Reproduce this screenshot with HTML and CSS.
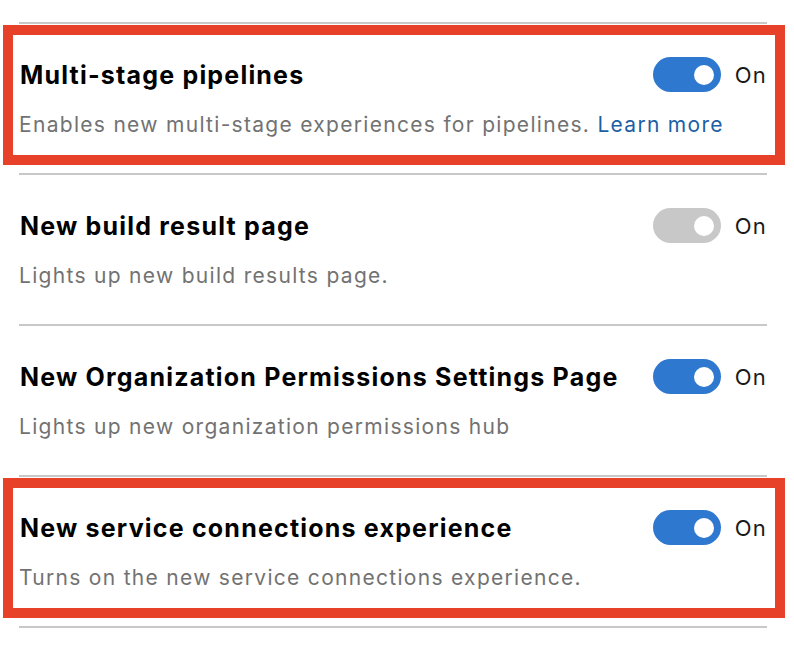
FILE: index.html
```html
<!DOCTYPE html>
<html>
<head>
<meta charset="utf-8">
<link rel="stylesheet" href="styles.css">
</head>
<body>
<div class="list">
  <div class="row marked">
    <div class="head">
      <div class="title">Multi-stage pipelines</div>
      <div class="ctl"><span class="toggle on"><span class="knob"></span></span><span class="state">On</span></div>
    </div>
    <div class="desc">Enables new multi-stage experiences for pipelines. <a class="link">Learn more</a></div>
  </div>
  <div class="row">
    <div class="head">
      <div class="title">New build result page</div>
      <div class="ctl"><span class="toggle off"><span class="knob"></span></span><span class="state">On</span></div>
    </div>
    <div class="desc">Lights up new build results page.</div>
  </div>
  <div class="row">
    <div class="head">
      <div class="title">New Organization Permissions Settings Page</div>
      <div class="ctl"><span class="toggle on"><span class="knob"></span></span><span class="state">On</span></div>
    </div>
    <div class="desc">Lights up new organization permissions hub</div>
  </div>
  <div class="row marked">
    <div class="head">
      <div class="title">New service connections experience</div>
      <div class="ctl"><span class="toggle on"><span class="knob"></span></span><span class="state">On</span></div>
    </div>
    <div class="desc">Turns on the new service connections experience.</div>
  </div>
  <div class="end"></div>
</div>
</body>
</html>
```
FILE: styles.css
```css
html, body {
  margin: 0;
  padding: 0;
  background: #ffffff;
}
body {
  font-family: Inter, "Noto Sans", sans-serif;
  color: #000;
}
.list {
  width: 748px;
  margin-left: 19px;
  padding-top: 22px;
}
.row {
  position: relative;
  height: 149px;
  border-top: 2px solid #c8c8c8;
  display: flex;
  flex-direction: column;
}
.end {
  border-top: 2px solid #c8c8c8;
}
.marked::after {
  content: "";
  position: absolute;
  left: -16px;
  right: -18px;
  top: 1px;
  height: 120px;
  border: 10px solid #e8412a;
  pointer-events: none;
}
.head {
  margin-top: 33px;
  height: 35px;
  display: flex;
  align-items: center;
  justify-content: space-between;
}
.title {
  font-size: 25px;
  font-weight: 700;
  letter-spacing: 1.2px;
  margin-left: 1px;
}
.ctl {
  display: flex;
  align-items: center;
  gap: 14px;
}
.toggle {
  position: relative;
  width: 68px;
  height: 35px;
  border-radius: 18px;
  display: block;
}
.toggle.on { background: #2f78cf; }
.toggle.off { background: #c8c8c8; }
.knob {
  position: absolute;
  right: 7px;
  top: 7.5px;
  width: 20px;
  height: 20px;
  border-radius: 50%;
  background: #fff;
}
.state {
  font-size: 22px;
  letter-spacing: 1.2px;
  color: #1a1a1a;
}
.desc {
  margin-top: 21px;
  font-size: 21px;
  line-height: 24px;
  letter-spacing: 1.3px;
  color: #727272;
}
.link {
  color: #1d5fa6;
}
```
